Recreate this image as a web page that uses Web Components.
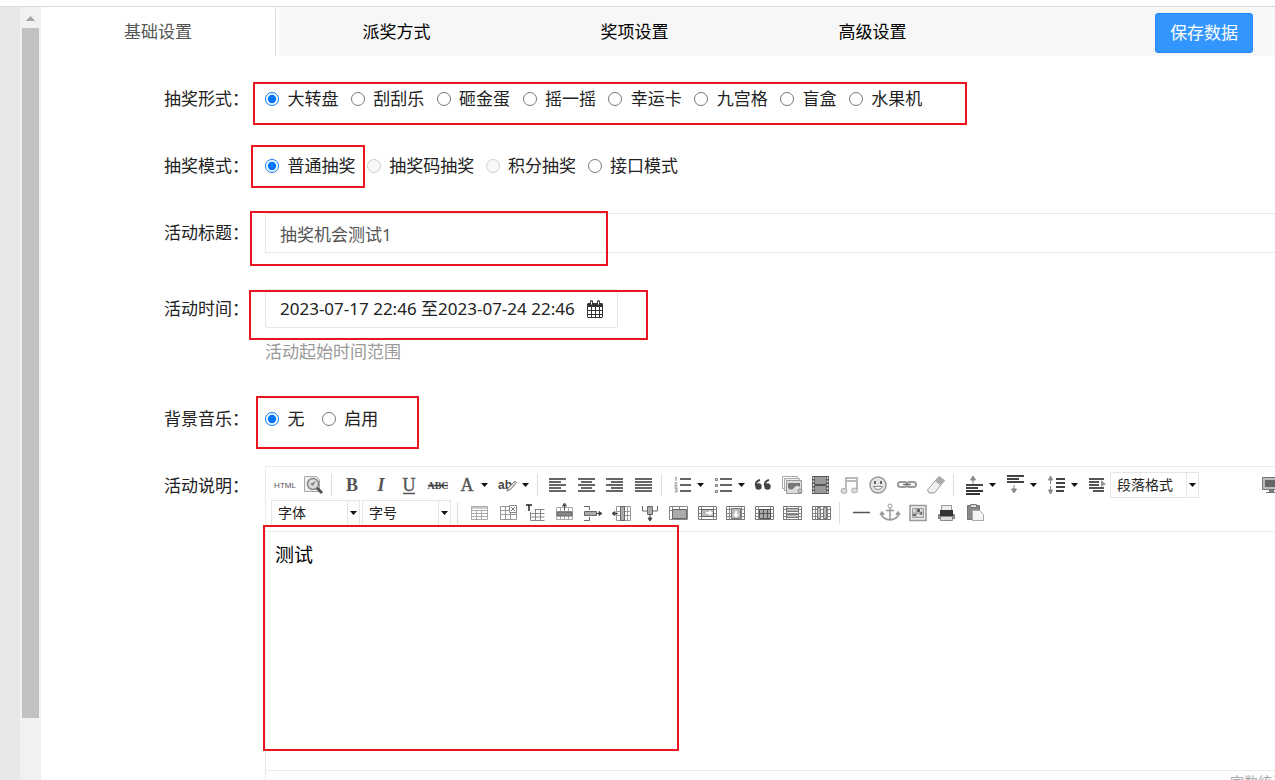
<!DOCTYPE html>
<html lang="zh-CN">
<head>
<meta charset="utf-8">
<title>基础设置</title>
<style>
  html, body {
    height: 100%;
  }
  body {
    margin: 0;
    overflow: hidden;
    background: #fff;
    color: #222;
    font: 17px/26px "Noto Sans", "Noto Sans CJK SC", sans-serif;
  }
</style>
</head>
<body>

<template id="settings-page">
  <style>
    :host {
      display: flex;
      height: 100vh;
      box-sizing: border-box;
      padding-top: 6px;
    }
    .side {
      flex: none;
      width: 20px;
      border-top: 1px solid #dcdcdc;
      background: #e8e8e8;
    }
    .scroll {
      flex: none;
      display: flex;
      flex-direction: column;
      width: 17px;
      padding: 0 2px;
      border-top: 1px solid #dcdcdc;
      background: #f1f1f1;
    }
    .up {
      flex: none;
      height: 5px;
      margin: 9px 4px 7px;
      background: #a3a3a3;
      clip-path: polygon(50% 0, 100% 100%, 0 100%);
    }
    .thumb {
      flex: 1;
      margin-bottom: 62px;
      background: #c1c1c1;
    }
    main {
      flex: 1;
      min-width: 0;
      border-top: 1px solid #dcdcdc;
    }
    .form {
      display: flex;
      flex-direction: column;
      gap: 27px;
      margin-right: -16px;
      padding-top: 23px;
    }
  </style>
  <div class="side"></div>
  <div class="scroll"><div class="up"></div><div class="thumb"></div></div>
  <main>
    <slot name="tabs"></slot>
    <div class="form"><slot></slot></div>
  </main>
</template>

<template id="tab-bar">
  <style>
    :host {
      display: flex;
      height: 49px;
      background: #f7f7f7;
    }
    nav {
      flex: 1;
      display: flex;
      gap: 3px;
      min-width: 0;
    }
    a {
      flex: 0 1 235px;
      box-sizing: border-box;
      color: #000;
      line-height: 50px;
      text-align: center;
      text-decoration: none;
      white-space: nowrap;
    }
    a.active {
      border-right: 1px solid #dcdcdc;
      border-radius: 4px 4px 0 0;
      background: #fff;
      box-shadow: 3px 0 #fff;
      color: #555;
    }
    button {
      flex: none;
      height: 40px;
      margin: 6px 22px 0 0;
      padding: 0 14px;
      border: 1px solid #1f87f5;
      border-radius: 3px;
      background: #3396fe;
      color: #fff;
      font: inherit;
    }
  </style>
  <nav></nav>
  <button type="button"><slot></slot></button>
</template>

<template id="form-row">
  <style>
    :host {
      display: grid;
      grid-template-columns: 208px minmax(0, 1fr);
      column-gap: 16px;
    }
    .label {
      line-height: 40px;
      text-align: right;
    }
    .control {
      position: relative;
      min-height: 40px;
    }
  </style>
  <div class="label"><slot name="label"></slot></div>
  <div class="control"><slot></slot></div>
</template>

<template id="radio-group">
  <style>
    :host {
      display: block;
      line-height: 40px;
    }
    fieldset {
      margin: 0;
      padding: 0;
      border: 0;
      white-space: nowrap;
    }
    label {
      margin-right: var(--radio-gap, 8px);
    }
    input {
      width: 14px;
      height: 14px;
      margin: 0 4px 0 0;
      vertical-align: -1px;
      accent-color: #0075ff;
    }
  </style>
  <fieldset></fieldset>
</template>

<template id="text-field">
  <style>
    :host {
      display: block;
      margin-bottom: 9px;
    }
    input {
      display: block;
      box-sizing: border-box;
      width: 100%;
      height: 40px;
      padding: 0 14px;
      border: 1px solid #e7e7eb;
      background: #fff;
      color: #555;
      font: inherit;
    }
  </style>
  <input type="text">
</template>

<template id="date-range">
  <style>
    :host {
      display: block;
      margin-bottom: 9px;
    }
    button {
      display: flex;
      align-items: center;
      justify-content: space-between;
      min-width: 353px;
      height: 39px;
      margin-bottom: 13px;
      padding: 0 13px 0 14px;
      border: 1px solid #e7e7eb;
      border-radius: 2px;
      background: #fff;
      color: #222;
      font: inherit;
    }
    p {
      margin: 0;
      color: #999;
      line-height: 22px;
    }
  </style>
  <button type="button">
    <span></span>
    <svg width="18" height="18" viewBox="0 0 18 18">
      <path fill="#333" fill-rule="evenodd" d="M2 3h2V1.500a1.500 1.500 0 0 1 3 0V3h4V1.500a1.500 1.500 0 0 1 3 0V3h2l1 1v13l-1 1H2l-1-1V4zM2 7v3h3V7zM6 7v3h3V7zM10 7v3h3V7zM14 7v3h2V7zM2 11v3h3v-3zM6 11v3h3v-3zM10 11v3h3v-3zM14 11v3h2v-3zM2 15v2h3v-2zM6 15v2h3v-2zM10 15v2h3v-2zM14 15v2h2v-2z"/>
      <path stroke="#fff" d="M5.500 1.500v3M12.500 1.500v3"/>
    </svg>
  </button>
  <p><slot></slot></p>
</template>

<template id="mark-box">
  <style>
    :host {
      position: absolute;
      z-index: 2;
      box-sizing: border-box;
      border: 2px solid #ea151e;
      pointer-events: none;
    }
  </style>
</template>

<template id="tool-button">
  <style>
    :host {
      display: block;
      height: 26px;
    }
    :host([menu]) {
      width: 41px;
    }
    button {
      display: flex;
      align-items: center;
      width: 100%;
      height: 26px;
      padding: 0;
      border: 0;
      background: none;
    }
    svg {
      flex: none;
      display: block;
      margin: 0 auto;
    }
    :host([menu]) svg {
      margin: 0 0 0 4px;
    }
    :host([menu]) button::after {
      content: "";
      width: 7px;
      height: 4px;
      margin-left: 3px;
      background: #111;
      clip-path: polygon(0 0, 100% 0, 50% 100%);
    }
  </style>
  <button type="button"></button>
</template>

<template id="tool-select">
  <style>
    :host {
      display: flex;
      position: relative;
      box-sizing: border-box;
      width: 89px;
      height: 26px;
      border: 1px solid #e5e5e5;
    }
    select {
      appearance: none;
      flex: 1;
      min-width: 0;
      padding: 0 6px;
      border: 0;
      border-radius: 0;
      background: #fff;
      color: #222;
      font: 14px/24px "Noto Sans", "Noto Sans CJK SC", sans-serif;
    }
    .arrow {
      display: grid;
      place-items: center;
      width: 11px;
      border-left: 1px solid #e5e5e5;
      pointer-events: none;
    }
    .arrow::before {
      content: "";
      width: 7px;
      height: 4px;
      background: #111;
      clip-path: polygon(0 0, 100% 0, 50% 100%);
    }
  </style>
  <select><option></option></select>
  <span class="arrow"></span>
</template>

<template id="rich-editor">
  <style>
    :host {
      display: block;
      border: 1px solid #ebebeb;
    }
    .toolbar {
      display: flex;
      flex-direction: column;
      gap: 2px;
      padding: 5px;
      border-bottom: 1px solid #ebebeb;
    }
    .line {
      display: flex;
    }
    .group {
      display: grid;
      grid-auto-flow: column;
      grid-auto-columns: 1fr;
    }
    .menus {
      display: flex;
    }
    .sep {
      width: 1px;
      height: 22px;
      margin: 2px 6px 2px 3px;
      background: #ddd;
    }
    .two { width: 57px; }
    .four { width: 114px; }
    .five { width: 142px; }
    .seven { width: 200px; }
    .thirteen { width: 371px; }
    .one { width: 27px; }
    .end { width: 28px; margin-left: auto; }
    .line tool-select + tool-select { margin: 0 3px 0 2px; }
    .line + .line .sep { margin-right: 7px; }
    textarea {
      display: block;
      box-sizing: border-box;
      width: 100%;
      height: 238px;
      padding: 10px 9px;
      border: 0;
      outline: 0;
      resize: none;
      background: #fff;
      color: #000;
      font: 19px/26px "Noto Sans", "Noto Sans CJK SC", sans-serif;
    }
    .status {
      padding: 0 4px;
      border-top: 1px solid #ebebeb;
      color: #aaa;
      font-size: 14px;
      line-height: 22px;
      text-align: right;
    }
  </style>
  <div class="toolbar">
    <div class="line">
      <div class="group two"><tool-button icon="html"></tool-button><tool-button icon="preview"></tool-button></div>
      <i class="sep"></i>
      <div class="group four"><tool-button icon="bold"></tool-button><tool-button icon="italic"></tool-button><tool-button icon="underline"></tool-button><tool-button icon="strike"></tool-button></div>
      <div class="menus"><tool-button menu icon="color"></tool-button><tool-button menu icon="marker"></tool-button></div>
      <i class="sep"></i>
      <div class="group four"><tool-button icon="left"></tool-button><tool-button icon="center"></tool-button><tool-button icon="right"></tool-button><tool-button icon="justify"></tool-button></div>
      <i class="sep"></i>
      <div class="menus"><tool-button menu icon="ol"></tool-button><tool-button menu icon="ul"></tool-button></div>
      <div class="group seven"><tool-button icon="quote"></tool-button><tool-button icon="image"></tool-button><tool-button icon="film"></tool-button><tool-button icon="music"></tool-button><tool-button icon="smile"></tool-button><tool-button icon="link"></tool-button><tool-button icon="eraser"></tool-button></div>
      <i class="sep"></i>
      <div class="menus"><tool-button menu icon="before"></tool-button><tool-button menu icon="after"></tool-button><tool-button menu icon="leading"></tool-button></div>
      <div class="group one"><tool-button icon="indent"></tool-button></div>
      <tool-select text="段落格式"></tool-select>
      <div class="group end"><tool-button icon="screen"></tool-button></div>
    </div>
    <div class="line">
      <tool-select text="字体"></tool-select><tool-select text="字号"></tool-select>
      <i class="sep"></i>
      <div class="group thirteen"><tool-button icon="table"></tool-button><tool-button icon="tableDel"></tool-button><tool-button icon="tableTitle"></tool-button><tool-button icon="rowAdd"></tool-button><tool-button icon="rowDel"></tool-button><tool-button icon="colAdd"></tool-button><tool-button icon="colDel"></tool-button><tool-button icon="merge"></tool-button><tool-button icon="mergeRight"></tool-button><tool-button icon="mergeDown"></tool-button><tool-button icon="cells"></tool-button><tool-button icon="rows"></tool-button><tool-button icon="cols"></tool-button></div>
      <i class="sep"></i>
      <div class="group five"><tool-button icon="rule"></tool-button><tool-button icon="anchor"></tool-button><tool-button icon="map"></tool-button><tool-button icon="print"></tool-button><tool-button icon="paste"></tool-button></div>
    </div>
  </div>
  <textarea aria-label="活动说明"></textarea>
  <div class="status">字数统计</div>
</template>

<script>
  const stamp = (host, id) => {
    const root = host.attachShadow({ mode: 'open' });
    root.appendChild(document.getElementById(id).content.cloneNode(true));
    return root;
  };

  // horizontal bars: [x, y, width] each
  const bars = (list, color = '#666') => list
    .map(([x, y, w]) => `<path stroke="${color}" stroke-width="2" d="M${x} ${y}h${w}"/>`).join('');

  // table with film-like cells at both sides, used by the cell tools
  const frame = inner => `<path fill="#fff" stroke="#777" d="M1.500 4.500h18v13h-18z"/>
    <path stroke="#888" d="M1.500 7.500h18M1.500 11.500h18M1.500 14.500h18M4.500 4.500v13M16.500 4.500v13"/>${inner}`;

  const grid = '<path fill="#fff" stroke="#aaa" d="M2.500 5.500h16v12h-16zM2.500 9.500h16M2.500 13.500h16M6.500 5.500v12M10.500 5.500v12M14.500 5.500v12"/>';

  const letter = (text, size, extra = '') =>
    `<text x="11" y="17" text-anchor="middle" font-family="Liberation Serif, serif" font-size="${size}" fill="#555" ${extra}>${text}</text>`;

  const icons = {
    html: '<text x="11" y="14" text-anchor="middle" font-family="Liberation Sans, sans-serif" font-size="8" fill="#555">HTML</text>',
    preview: `<path fill="#eee" stroke="#aaa" d="M1.500 2.500h12l3 3v12h-15z"/>
      <circle cx="10" cy="10" r="5.500" fill="#ddd" stroke="#888" stroke-width="1.500"/>
      <path fill="#888" d="M7 10l6-3-3 5z"/><path stroke="#555" stroke-width="3" d="M14 14l5 5"/>`,
    bold: letter('B', 18, 'font-weight="bold"'),
    italic: letter('I', 18, 'font-weight="bold" font-style="italic"'),
    underline: letter('U', 18, 'stroke="#555" stroke-width=".4"') + '<path stroke="#555" stroke-width="1.500" d="M5 19.500h12"/>',
    strike: `<text x="11" y="15" text-anchor="middle" font-family="Liberation Serif, serif" font-weight="bold" font-size="10" fill="#444">ABC</text>
      <path stroke="#444" stroke-width="1.500" d="M1 11.500h20"/>`,
    color: letter('A', 18, 'stroke="#555" stroke-width=".4"'),
    marker: `<text x="1" y="15" font-family="Liberation Sans, sans-serif" font-size="12" font-weight="bold" fill="#444">ab</text>
      <path fill="#ddd" stroke="#777" d="M18 7l1.500 1.500-6 7-3.500 1.500 1-3z"/>`,
    left: bars([[2, 5, 17], [2, 8, 12], [2, 11, 17], [2, 14, 12], [2, 17, 17]]),
    center: bars([[2, 5, 17], [5, 8, 11], [2, 11, 17], [5, 14, 11], [2, 17, 17]]),
    right: bars([[2, 5, 17], [7, 8, 12], [2, 11, 17], [7, 14, 12], [2, 17, 17]]),
    justify: bars([[2, 5, 17], [2, 8, 17], [2, 11, 17], [2, 14, 17], [2, 17, 17]]),
    ol: `<path fill="none" stroke="#888" d="M3 4l1-1v4M2.500 9q3-1 2 1l-2 2h3M2.500 14h3l-2 2q3 0 1 2h-2"/>
      ${bars([[8, 5, 11], [8, 11, 11], [8, 17, 11]], '#666')}`,
    ul: `<path fill="none" stroke="#777" d="M2.500 4.500h2v2h-2zM2.500 10.500h2v2h-2zM2.500 16.500h2v2h-2z"/>
      ${bars([[7, 5, 12], [7, 11, 12], [7, 17, 12]], '#666')}`,
    quote: `<path fill="none" stroke="#444" stroke-width="2" d="M3 12q-1-5 4-6M12 12q-1-5 4-6"/>
      <circle cx="5.500" cy="12.500" r="3.200" fill="#444"/><circle cx="14.500" cy="12.500" r="3.200" fill="#444"/>`,
    image: `<path fill="#fff" stroke="#aaa" d="M.5 2.500h15v12H.500z"/><path fill="#eee" stroke="#aaa" d="M2.500 4.500h15v12h-15z"/>
      <path fill="#ddd" stroke="#999" d="M4.500 6.500h15v13h-15z"/><path fill="#777" d="M6 9h12v4q-4-3-6 1-3 3-6 0z"/>
      <circle cx="18" cy="17" r="2" fill="#ccc" stroke="#888"/>`,
    film: `<path fill="#555" d="M2 2h17v18H2z"/><path fill="#999" d="M5 3h11v7H5zM5 12h11v7H5z"/>
      <path stroke="#ddd" stroke-width="1.500" stroke-dasharray="2 1.500" d="M3.500 3v16M17.500 3v16"/>`,
    music: `<path fill="none" stroke="#bbb" stroke-width="2" d="M7 16V4h11v12M7 7h11"/>
      <ellipse cx="5" cy="17" rx="3" ry="2.500" fill="#ddd" stroke="#aaa"/><ellipse cx="15.500" cy="16.500" rx="3" ry="2.500" fill="#ddd" stroke="#aaa"/>`,
    smile: `<circle cx="10" cy="11" r="8" fill="#e6e6e6" stroke="#999" stroke-width="1.500"/>
      <path stroke="#666" stroke-width="2" d="M7 7v3M13 7v3"/><path fill="#fff" stroke="#888" d="M5.500 12.500h9q-1 3-4.500 3t-4.500-3z"/>`,
    link: `<rect x="2" y="8" width="9" height="5" rx="2.500" fill="none" stroke="#999" stroke-width="2"/>
      <rect x="11" y="8" width="9" height="5" rx="2.500" fill="none" stroke="#999" stroke-width="2"/><path stroke="#777" stroke-width="1.500" d="M7 10.500h8"/>`,
    eraser: `<path fill="#eee" stroke="#999" d="M14 2.500l5.500 4-10 12.500H4L2.500 16z"/><path fill="#aaa" d="M10 7l5 4 4-4.500-5-4z"/><path stroke="#fff" d="M4 16l6-7"/>`,
    before: `<path fill="#888" stroke="#888" d="M9 2l2.500 4h-5zM9 6v4"/>${bars([[2, 11, 17], [2, 14, 12]], '#444')}${bars([[2, 17, 17], [2, 20, 14]], '#333')}`,
    after: `${bars([[2, 2, 17], [2, 5, 12], [2, 8, 17]], '#444')}<path fill="#888" stroke="#888" d="M9 11v4M9 19l2.500-4h-5z"/>`,
    leading: `<path fill="#888" stroke="#888" d="M4.500 2l2 4h-4zM4.500 6v4M4.500 12v4M4.500 20l2-4h-4z"/>
      ${bars([[10, 5, 9], [10, 9, 9], [10, 13, 9], [10, 17, 8]], '#444')}`,
    indent: `${bars([[3, 5, 15], [3, 8, 10], [3, 11, 10], [3, 14, 15], [7, 17, 11]], '#555')}<path fill="#999" d="M15 6l5 4-5 3z"/>`,
    screen: `<path fill="#bbb" stroke="#777" d="M2.500 3.500h18v12h-18z"/><path fill="#666" d="M5 6h13v7H5z"/><path fill="#777" d="M9 16h5v2h3v1H6v-1h3z"/>`,
    table: '<path fill="#ccc" d="M3 4h16v3H3z"/><path fill="none" stroke="#aaa" d="M3.500 4.500h16v13h-16zM3.500 8.500h16M3.500 11.500h16M3.500 14.500h16M8.500 8v9M13.500 8v9"/>',
    tableDel: '<path fill="#fff" stroke="#999" d="M3.500 4.500h16v13h-16zM3.500 8.500h16M3.500 12.500h16M8.500 4v13M13.500 8v9"/><path fill="#fff" stroke="#888" d="M12.500 3.500h7v7h-7z"/><path stroke="#777" d="M14 5l4 4M18 5l-4 4"/>',
    tableTitle: '<path stroke="#222" stroke-width="1.500" d="M1 3h6M4 3v6"/><path fill="none" stroke="#888" d="M5.500 10v8.500h14M9.500 7.500h10M5.500 11.500h14M5.500 15h14M10.500 8v10M15.500 8v10"/>',
    rowAdd: `${grid}<path fill="#888" stroke="#666" d="M3 10h15v4H3z"/><path fill="#555" stroke="#555" d="M10.500 1l2 3h-4zM10.500 3v5"/>`,
    rowDel: '<path fill="none" stroke="#666" d="M2 4.500h5.500V8M2 18.500h5.500V15"/><path fill="#aaa" stroke="#666" d="M2.500 9.500h12v4h-12z"/><path fill="#444" stroke="#444" d="M14 11.500h3M17 9.500l3 2-3 2z"/>',
    colAdd: '<path fill="#fff" stroke="#999" d="M5.500 4.500h14v14h-14zM5.500 9.500h14M5.500 13.500h14M16.500 4v14"/><path fill="#aaa" stroke="#666" d="M9.500 4.500h4v14h-4z"/><path fill="#444" stroke="#444" d="M4 11.500h3M4 9.500l-3 2 3 2z"/>',
    colDel: '<path fill="none" stroke="#666" d="M3.500 4v5H8M18.500 4v5H14"/><path fill="#aaa" stroke="#666" d="M8.500 4.500h5v8h-5z"/><path fill="#444" stroke="#444" d="M11 12v4M9 16l2 3 2-3z"/>',
    merge: '<path fill="#fff" stroke="#888" d="M1.500 4.500h18v13h-18zM1.500 8.500h18M4.500 4.500v13M11.500 4.500v4"/><path fill="#aaa" stroke="#666" d="M4.500 7.500h14v9h-14z"/>',
    mergeRight: frame('<path fill="#bbb" stroke="#666" d="M4.500 7.500h12v7h-12z"/><path fill="#fff" d="M9 10h3V8l4 3-4 3v-2H9z"/>'),
    mergeDown: frame('<path fill="#bbb" stroke="#777" d="M6.500 6.500h9v10h-9z"/><path fill="#fff" d="M10 9h2v3h2l-3 4-3-4h2z"/>'),
    cells: frame('<path fill="#aaa" stroke="#555" d="M5.500 7.500h11v9h-11zM5.500 11.500h11M9.500 7v9M13.500 7v9"/>'),
    rows: frame('<path fill="#bbb" stroke="#777" d="M4.500 6.500h12v3h-12zM4.500 12.500h12v3h-12z"/>'),
    cols: frame('<path fill="#bbb" stroke="#777" d="M6.500 5.500h3v11h-3zM12.500 5.500h3v11h-3z"/>'),
    rule: '<path stroke="#555" stroke-width="1.500" d="M3 10.500h17"/>',
    anchor: '<circle cx="11" cy="4" r="2" fill="none" stroke="#999"/><path fill="none" stroke="#999" stroke-width="1.500" d="M11 6v12M7 8.500h8M3 11v3q2 3 8 4 6-1 8-4v-3M1 13l2-3 2 3M17 13l2-3 2 3"/>',
    map: '<path fill="#eee" stroke="#999" stroke-width="1.500" d="M3 3.500h16v15H3z"/><path fill="#ddd" stroke="#999" d="M5.500 6.500h11v9h-11zM9 6v9M5 11h11"/><path fill="#666" d="M10 7h3v3h-3zM6 12h3v2H6zM12 12l3-3v4z"/>',
    print: '<path fill="#eee" stroke="#999" d="M6.500 3.500h10v5h-10z"/><path fill="#333" d="M5 8h13v6H5z"/><path fill="#888" d="M3 12h17v5H3z"/><path fill="#333" d="M5 9h13v5H5z"/><path fill="#ddd" stroke="#888" d="M5.500 14.500h12v4h-12z"/>',
    paste: '<path fill="#888" stroke="#777" d="M3.500 3.500h12v14h-12z"/><path fill="#ddd" stroke="#777" d="M6.500 2.500h6v3h-6z"/><path fill="#f4f4f4" stroke="#aaa" d="M8.500 8.500h7l4 4v6h-11z"/>'
  };

  class SettingsPage extends HTMLElement {
    constructor() {
      super();
      stamp(this, 'settings-page');
    }
  }

  class TabBar extends HTMLElement {
    connectedCallback() {
      const nav = stamp(this, 'tab-bar').querySelector('nav');
      this.getAttribute('tabs').split('|').forEach((name, i) => {
        const link = document.createElement('a');
        link.href = '#tab' + i;
        link.textContent = name;
        link.className = i === 0 ? 'active' : '';
        nav.appendChild(link);
      });
    }
  }

  class FormRow extends HTMLElement {
    constructor() {
      super();
      stamp(this, 'form-row');
    }
  }

  // The first option is picked; a leading "-" disables an option.
  class RadioGroup extends HTMLElement {
    connectedCallback() {
      const set = stamp(this, 'radio-group').querySelector('fieldset');
      set.setAttribute('aria-label', this.getAttribute('label'));
      this.getAttribute('options').split('|').forEach((option, i) => {
        const label = document.createElement('label');
        const input = document.createElement('input');
        input.type = 'radio';
        input.name = 'choice';
        input.checked = i === 0;
        input.disabled = option.startsWith('-');
        label.append(input, ' ' + option.replace('-', ''));
        set.append(label, ' ');
      });
    }
  }

  class TextField extends HTMLElement {
    connectedCallback() {
      const input = stamp(this, 'text-field').querySelector('input');
      input.value = this.getAttribute('value');
      input.setAttribute('aria-label', this.getAttribute('label'));
    }
  }

  class DateRange extends HTMLElement {
    connectedCallback() {
      const root = stamp(this, 'date-range');
      root.querySelector('span').textContent = `${this.getAttribute('from')} 至${this.getAttribute('to')}`;
    }
  }

  // box="x y width height", measured from the row's control
  class MarkBox extends HTMLElement {
    connectedCallback() {
      stamp(this, 'mark-box');
      const [x, y, w, h] = this.getAttribute('box').split(' ');
      Object.assign(this.style, { left: x + 'px', top: y + 'px', width: w + 'px', height: h + 'px' });
    }
  }

  class ToolButton extends HTMLElement {
    connectedCallback() {
      const button = stamp(this, 'tool-button').querySelector('button');
      const name = this.getAttribute('icon');
      button.setAttribute('aria-label', name);
      button.innerHTML = `<svg width="22" height="22" viewBox="0 0 22 22">${icons[name]}</svg>`;
    }
  }

  class ToolSelect extends HTMLElement {
    connectedCallback() {
      const root = stamp(this, 'tool-select');
      root.querySelector('option').textContent = this.getAttribute('text');
      root.querySelector('select').setAttribute('aria-label', this.getAttribute('text'));
    }
  }

  class RichEditor extends HTMLElement {
    connectedCallback() {
      stamp(this, 'rich-editor').querySelector('textarea').value = this.getAttribute('value');
    }
  }

  customElements.define('settings-page', SettingsPage);
  customElements.define('tab-bar', TabBar);
  customElements.define('form-row', FormRow);
  customElements.define('radio-group', RadioGroup);
  customElements.define('text-field', TextField);
  customElements.define('date-range', DateRange);
  customElements.define('mark-box', MarkBox);
  customElements.define('tool-button', ToolButton);
  customElements.define('tool-select', ToolSelect);
  customElements.define('rich-editor', RichEditor);
</script>

<settings-page>
  <tab-bar slot="tabs" tabs="基础设置|派奖方式|奖项设置|高级设置">保存数据</tab-bar>
  <form-row>
    <span slot="label">抽奖形式：</span>
    <radio-group label="抽奖形式" options="大转盘|刮刮乐|砸金蛋|摇一摇|幸运卡|九宫格|盲盒|水果机"></radio-group>
    <mark-box box="-12 3 714 43"></mark-box>
  </form-row>
  <form-row>
    <span slot="label">抽奖模式：</span>
    <radio-group style="--radio-gap: 7px" label="抽奖模式" options="普通抽奖|-抽奖码抽奖|-积分抽奖|接口模式"></radio-group>
    <mark-box box="-14 -1 114 43"></mark-box>
  </form-row>
  <form-row>
    <span slot="label">活动标题：</span>
    <text-field label="活动标题" value="抽奖机会测试1"></text-field>
    <mark-box box="-15 -2 358 55"></mark-box>
  </form-row>
  <form-row>
    <span slot="label">活动时间：</span>
    <date-range from="2023-07-17 22:46" to="2023-07-24 22:46">活动起始时间范围</date-range>
    <mark-box box="-16 1 399 50"></mark-box>
  </form-row>
  <form-row>
    <span slot="label">背景音乐：</span>
    <radio-group style="--radio-gap: 13px" label="背景音乐" options="无|启用"></radio-group>
    <mark-box box="-9 -3 163 53"></mark-box>
  </form-row>
  <form-row>
    <span slot="label">活动说明：</span>
    <rich-editor value="测试"></rich-editor>
    <mark-box box="-2 59 416 226"></mark-box>
  </form-row>
</settings-page>

</body>
</html>
